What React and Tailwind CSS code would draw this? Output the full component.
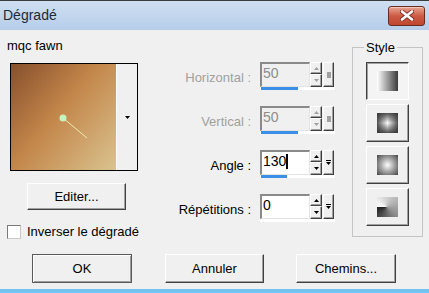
import React from "react";

const raised =
  "border border-t-white border-l-white border-r-[#404040] border-b-[#404040] shadow-[inset_-1px_-1px_0_#a0a0a0]";
const sunkenBtn =
  "border border-t-[#404040] border-l-[#404040] border-r-white border-b-white shadow-[inset_1px_1px_0_#a0a0a0]";

function Arrow({ up, color }) {
  return (
    <svg width="5" height="3" viewBox="0 0 5 3">
      {up ? (
        <polygon points="2.5,0 5,3 0,3" fill={color} />
      ) : (
        <polygon points="0,0 5,0 2.5,3" fill={color} />
      )}
    </svg>
  );
}

function Field({ value, enabled, bar, caret }) {
  const arrowColor = enabled ? "#000" : "#a0a0a0";
  return (
    <div className="w-[75px] flex flex-col">
      <div className="flex h-[25px]">
        <div
          className={`w-[50px] h-[25px] border-t-2 border-l-2 border-r border-b border-t-[#8a8a8a] border-l-[#8a8a8a] border-r-[#e3e3e3] border-b-[#e3e3e3] pl-[1px] pt-[2px] flex items-start ${
            enabled ? "bg-white text-black" : "bg-[#f0f0f0] text-[#8c8c8c]"
          }`}
        >
          <span className="text-[14px] leading-[15px]">{value}</span>
          {caret && <span className="w-[2px] h-[15px] bg-black"></span>}
        </div>
        <div className="w-[12px] flex flex-col">
          <div className={`h-[12px] flex items-center justify-center bg-[#f0f0f0] ${raised}`}>
            <Arrow up color={arrowColor} />
          </div>
          <div className={`h-[13px] flex items-center justify-center bg-[#f0f0f0] ${raised}`}>
            <Arrow color={arrowColor} />
          </div>
        </div>
        <div className={`ml-[1px] w-[11px] h-[25px] flex items-center justify-center bg-[#f0f0f0] ${raised}`}>
          {enabled ? (
            <svg width="5" height="6" viewBox="0 0 5 6">
              <rect x="0" y="0" width="5" height="1" fill="#000" />
              <polygon points="0,2 5,2 2.5,5" fill="#000" />
            </svg>
          ) : (
            <span className="w-[4px] h-[6px] bg-[#a0a0a0]"></span>
          )}
        </div>
      </div>
      <div className="h-[3px] bg-white">
        {bar > 0 && <div className={`h-[3px] ml-[1px] bg-[#3b8fe6] ${bar === 37 ? "w-[37px]" : "w-[26px]"}`}></div>}
      </div>
    </div>
  );
}

function Row({ label, enabled, value, bar, caret }) {
  return (
    <div className="flex h-[28px]">
      <div className={`w-[101px] text-right pt-[8px] leading-[15px] ${enabled ? "text-black" : "text-[#a0a0a0]"}`}>
        {label}
      </div>
      <div className="ml-[9px]">
        <Field value={value} enabled={enabled} bar={bar} caret={caret} />
      </div>
    </div>
  );
}

function StyleBtn({ pressed, icon }) {
  return (
    <div
      className={`w-[43px] h-[38px] flex items-center justify-center ${
        pressed ? `bg-[#f4f4f4] ${sunkenBtn}` : `bg-[#f0f0f0] ${raised}`
      }`}
    >
      <div className={`w-[21px] h-[20px] ${icon}`}></div>
    </div>
  );
}

export default function App() {
  return (
    <div className="w-[429px] h-[293px] bg-[#f0f0f0] flex flex-col overflow-hidden text-[13px] text-black font-['Liberation_Sans',Arial,sans-serif]">
      {/* barre de titre */}
      <div className="h-[30px] border-t border-[#3c3c3c] bg-linear-to-b from-[#cfdff1] to-[#b6cde9] flex items-center justify-between pl-[3px] pr-[4px]">
        <span className="text-[14px] text-[#1c2a3a]">Dégradé</span>
        <div className="w-[37px] h-[20px] rounded-[3px] border border-[#6b2a20] bg-linear-to-b from-[#e7a493] via-[#cc5a43] to-[#c0462f] flex items-center justify-center shadow-[inset_0_1px_0_#f3c7bb]">
          <svg width="14" height="11" viewBox="0 0 14 11">
            <path d="M2 1.5 L12 9.5 M12 1.5 L2 9.5" stroke="#7a2c20" strokeWidth="4.2" strokeLinecap="round" />
            <path d="M2 1.5 L12 9.5 M12 1.5 L2 9.5" stroke="#ffffff" strokeWidth="2.6" strokeLinecap="round" />
          </svg>
        </div>
      </div>

      <div className="flex h-[222px]">
        {/* colonne gauche */}
        <div className="w-[150px] flex flex-col">
          <p className="ml-[7px] mt-[8px] leading-[15px]">mqc fawn</p>
          <div className="ml-[10px] mt-[10px] w-[128px] h-[108px] border border-black flex">
            <div className="relative w-[105px] h-full bg-[linear-gradient(130deg,#87502c_0%,#c3864a_45%,#dac38f_100%)]">
              <svg className="absolute inset-0" width="105" height="106" viewBox="0 0 105 106">
                <line x1="52" y1="54" x2="76" y2="74" stroke="#f3e9ae" strokeWidth="1" />
                <circle cx="52" cy="54" r="3.5" fill="#c6f4c0" />
              </svg>
            </div>
            <div className="flex-1 border-l border-white bg-[#f0f0f0] flex items-center justify-center">
              <svg width="5" height="3" viewBox="0 0 5 3">
                <polygon points="0,0 5,0 2.5,3" fill="#000" />
              </svg>
            </div>
          </div>
          <div className={`ml-[27px] mt-[12px] w-[99px] h-[27px] flex items-center justify-center ${raised}`}>
            Editer...
          </div>
          <div className="ml-[7px] mt-[14px] flex items-center gap-[6px] h-[15px]">
            <span className="w-[14px] h-[14px] bg-white border border-t-[#7a7a7a] border-l-[#7a7a7a] border-r-[#c8c8c8] border-b-[#c8c8c8]"></span>
            <span className="leading-[15px]">Inverser le dégradé</span>
          </div>
        </div>

        {/* colonne des réglages */}
        <div className="w-[200px] flex flex-col pt-[32px] gap-[16px]">
          <Row label="Horizontal :" value="50" bar={37} />
          <Row label="Vertical :" value="50" bar={37} />
          <Row label="Angle :" value="130" bar={26} enabled caret />
          <Row label="Répétitions :" value="0" bar={0} enabled />
        </div>

        {/* style */}
        <fieldset className="ml-[2px] mt-[10px] w-[69px] h-[197px] border border-[#c4c4c4] px-[13px] pb-[10px]">
          <legend className="-ml-[2px] px-[2px] leading-[15px]">Style</legend>
          <div className="flex flex-col gap-[4px] pt-[7px]">
            <StyleBtn pressed icon="bg-[linear-gradient(90deg,#ffffff,#3a3a3a)]" />
            <StyleBtn icon="bg-[linear-gradient(90deg,rgba(50,50,50,0.85),rgba(255,255,255,0)_50%,rgba(50,50,50,0.85)),linear-gradient(180deg,rgba(50,50,50,0.85),rgba(255,255,255,0)_50%,rgba(50,50,50,0.85)),linear-gradient(#ffffff,#ffffff)]" />
            <StyleBtn icon="bg-[radial-gradient(circle,#ffffff_0%,#a8a8a8_45%,#454545_100%)]" />
            <StyleBtn icon="bg-[conic-gradient(from_270deg_at_45%_50%,#ffffff,#c8c8c8_30%,#909090_60%,#1e1e1e)]" />
          </div>
        </fieldset>
      </div>

      {/* boutons */}
      <div className="flex mt-[2px] h-[29px]">
        <div className="ml-[32px] w-[100px] h-[29px] flex items-center justify-center border border-[#5a5a5a] shadow-[inset_1px_1px_0_#ffffff,inset_-1px_-1px_0_#a0a0a0]">
          OK
        </div>
        <div className={`ml-[33px] w-[99px] h-[29px] flex items-center justify-center ${raised}`}>Annuler</div>
        <div className={`ml-[32px] w-[100px] h-[29px] flex items-center justify-center ${raised}`}>Chemins...</div>
      </div>

      <div className="mt-[6px] h-[4px] bg-[#74c2ef]"></div>
    </div>
  );
}
